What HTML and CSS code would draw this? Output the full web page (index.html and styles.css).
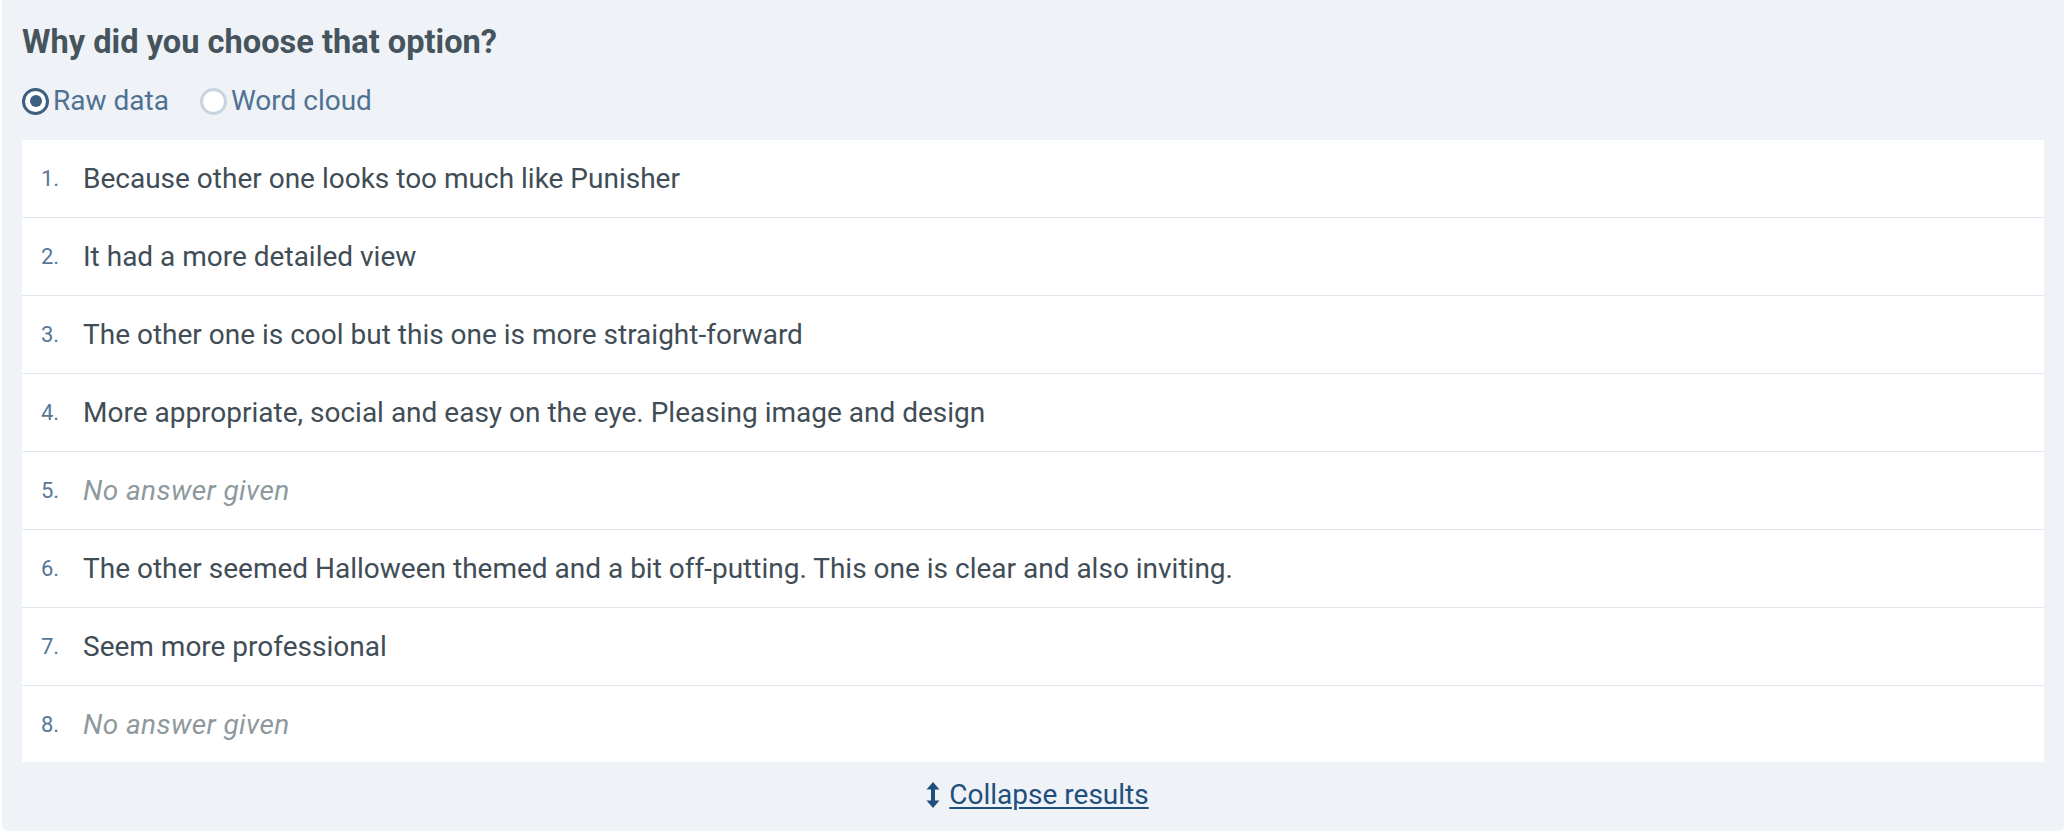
FILE: index.html
```html
<!DOCTYPE html>
<html lang="en">
<head>
<meta charset="utf-8">
<title>Why did you choose that option?</title>
<link rel="stylesheet" href="styles.css">
</head>
<body>
<section class="panel">
  <h2 class="title">Why did you choose that option?</h2>
  <div class="toggle">
    <label class="radio"><span class="dot checked"></span>Raw data</label>
    <label class="radio"><span class="dot"></span>Word cloud</label>
  </div>
  <ol class="answers">
    <li class="answer"><span class="num">1.</span><span class="txt">Because other one looks too much like Punisher</span></li>
    <li class="answer"><span class="num">2.</span><span class="txt">It had a more detailed view</span></li>
    <li class="answer"><span class="num">3.</span><span class="txt">The other one is cool but this one is more straight-forward</span></li>
    <li class="answer"><span class="num">4.</span><span class="txt">More appropriate, social and easy on the eye. Pleasing image and design</span></li>
    <li class="answer"><span class="num">5.</span><span class="txt empty">No answer given</span></li>
    <li class="answer"><span class="num">6.</span><span class="txt">The other seemed Halloween themed and a bit off-putting. This one is clear and also inviting.</span></li>
    <li class="answer"><span class="num">7.</span><span class="txt">Seem more professional</span></li>
    <li class="answer"><span class="num">8.</span><span class="txt empty">No answer given</span></li>
  </ol>
  <div class="footer">
    <a class="collapse" href="#">
      <svg class="arrow" width="14" height="26" viewBox="0 0 14 26" aria-hidden="true"><path d="M7 0 L13.5 7.5 H9 V18.5 H13.5 L7 26 L0.5 18.5 H5 V7.5 H0.5 Z" fill="#1f4f7c"/></svg><span class="link-text">Collapse results</span>
    </a>
  </div>
</section>
</body>
</html>
```
FILE: styles.css
```css
html, body {
  margin: 0;
  padding: 0;
  background: #ffffff;
}
body {
  font-family: Roboto, "Liberation Sans", Arial, sans-serif;
}
.panel {
  margin: 0 6px 0 2px;
  height: 831px;
  box-sizing: border-box;
  background: #eff3f7;
  border-radius: 0 0 6px 6px;
  padding: 20px 20px 0 20px;
  display: flex;
  flex-direction: column;
}
.title {
  margin: 0;
  font-size: 32.6px;
  font-weight: 700;
  line-height: 44px;
  color: #46545d;
}
.toggle {
  display: flex;
  gap: 31px;
  margin-top: 22px;
  height: 54px;
  align-items: flex-start;
}
.radio {
  display: flex;
  align-items: center;
  font-size: 28px;
  line-height: 30px;
  color: #4f7192;
}
.dot {
  width: 27px;
  height: 27px;
  box-sizing: border-box;
  border-radius: 50%;
  border: 3px solid #c9d4df;
  background: #ffffff;
  margin-right: 4px;
  position: relative;
}
.dot.checked {
  border-color: #3f5f80;
}
.dot.checked::after {
  content: "";
  position: absolute;
  left: 4.5px;
  top: 4.5px;
  width: 12px;
  height: 12px;
  border-radius: 50%;
  background: #3f5f80;
}
.answers {
  list-style: none;
  margin: 0;
  padding: 0;
  background: #ffffff;
}
.answer {
  display: flex;
  align-items: center;
  height: 78px;
  box-sizing: border-box;
  border-bottom: 1px solid #e1e7ee;
  padding-left: 19px;
}
.answer:last-child {
  border-bottom: none;
  height: 76px;
}
.num {
  width: 42px;
  font-size: 22px;
  color: #587695;
}
.txt {
  font-size: 28px;
  color: #414d56;
}
.txt.empty {
  font-style: italic;
  letter-spacing: 0.4px;
  color: #8e999e;
}
.footer {
  display: flex;
  justify-content: center;
  padding-top: 16px;
}
.collapse {
  display: flex;
  align-items: center;
  gap: 9px;
  margin-left: 9px;
  color: #1f4f7c;
  font-size: 28px;
  text-decoration: none;
}
.link-text {
  text-decoration: underline;
  text-underline-offset: 3px;
  text-decoration-thickness: 2px;
}
```
